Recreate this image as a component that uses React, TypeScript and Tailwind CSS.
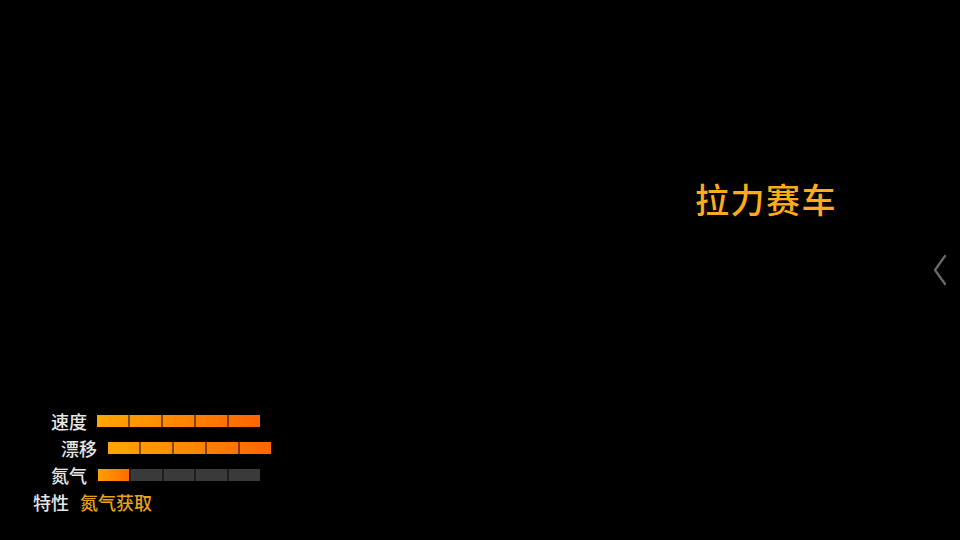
import React from "react";

const font = { fontFamily: '"Noto Sans CJK SC", "Noto Sans", sans-serif' };

function Bar({ width }: { width: string }) {
  return (
    <div className={`flex h-[12px] ${width} bg-gradient-to-r from-[#ffa600] to-[#ff6400]`}>
      {[0, 1, 2, 3, 4].map((i) => (
        <React.Fragment key={i}>
          {i > 0 && <div className="w-[2px] bg-black/50" />}
          <div className="flex-1" />
        </React.Fragment>
      ))}
    </div>
  );
}

function NitroBar() {
  return (
    <div className="flex h-[12px] w-[162px] bg-[#3a3a3a]">
      <div className="flex-1 bg-gradient-to-r from-[#ffa000] to-[#ff6a00]" />
      {[1, 2, 3, 4].map((i) => (
        <React.Fragment key={i}>
          <div className="w-[2px] bg-[#1e1e1e]" />
          <div className="flex-1" />
        </React.Fragment>
      ))}
    </div>
  );
}

export default function App() {
  return (
    <div className="relative w-[960px] h-[540px] bg-black overflow-hidden" style={font}>
      <div className="flex flex-col h-full">
        <div className="pl-[695px] pt-[177px]">
          <div className="text-[34px] leading-[44px] font-medium text-[#ffab1c] tracking-[1.5px]">拉力赛车</div>
        </div>
        <div className="flex-1" />
        <div className="flex flex-col pb-[25px] text-[18px] font-medium text-[#e6e6e6]">
          <div className="flex items-center h-[27px]">
            <div className="w-[87px] text-right leading-none">速度</div>
            <div className="w-[10px]" />
            <Bar width="w-[163px]" />
          </div>
          <div className="flex items-center h-[27px]">
            <div className="w-[97px] text-right leading-none">漂移</div>
            <div className="w-[11px]" />
            <Bar width="w-[163px]" />
          </div>
          <div className="flex items-center h-[27px]">
            <div className="w-[87px] text-right leading-none">氮气</div>
            <div className="w-[11px]" />
            <NitroBar />
          </div>
          <div className="flex items-center h-[27px] pl-[33px]">
            <div className="leading-none">特性</div>
            <div className="ml-[11px] leading-none text-[#e8a21c]">氮气获取</div>
          </div>
        </div>
      </div>
      <svg
        className="absolute right-[12px] top-[254px]"
        width="16"
        height="32"
        viewBox="0 0 16 32"
        fill="none"
      >
        <path d="M13 2 L3 16 L13 30" stroke="#6b6b6b" strokeWidth="2.2" strokeLinecap="round" strokeLinejoin="round" />
      </svg>
    </div>
  );
}
